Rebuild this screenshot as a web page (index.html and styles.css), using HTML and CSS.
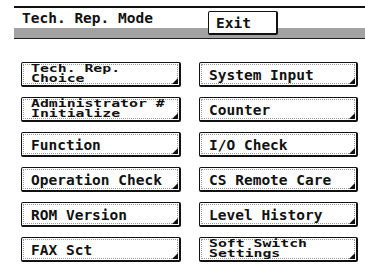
FILE: index.html
```html
<!DOCTYPE html>
<html lang="en">
<head>
    <meta charset="UTF-8">
    <title>Tech. Rep. Mode</title>
    <link rel="stylesheet" href="styles.css">
</head>
<body>
    <div class="header">
        <div class="title">Tech. Rep. Mode</div>
        <div class="bar"></div>
        <button class="exit">Exit</button>
    </div>
    <div class="menu">
        <button class="key two"><span>Tech. Rep.<br>Choice</span></button>
        <button class="key">System Input</button>
        <button class="key two"><span>Administrator #<br>Initialize</span></button>
        <button class="key">Counter</button>
        <button class="key">Function</button>
        <button class="key">I/O Check</button>
        <button class="key">Operation Check</button>
        <button class="key">CS Remote Care</button>
        <button class="key">ROM Version</button>
        <button class="key">Level History</button>
        <button class="key">FAX Sct</button>
        <button class="key two"><span>Soft Switch<br>Settings</span></button>
    </div>
</body>
</html>
```

FILE: styles.css
```css
body {
    margin: 0;
    background: #fff;
    font-family: "DejaVu Sans Mono", "Liberation Mono", monospace;
    font-weight: bold;
    color: #111;
    overflow: hidden;
}
.header {
    position: relative;
    margin: 6px 0 0 14px;
    border-top: 2px solid #111;
}
.title {
    height: 20px;
    padding-left: 8px;
    font-size: 14.5px;
    line-height: 20px;
}
.bar {
    height: 10px;
    background: #a2a2a2;
    border-bottom: 1px solid #222;
}
.exit {
    position: absolute;
    left: 194px;
    top: 3px;
    width: 70px;
    height: 24px;
    padding: 1px 0 0 7px;
    text-align: left;
    background: #fff;
    border: 1px solid #111;
    border-right-width: 2px;
    border-bottom-width: 2px;
    border-radius: 2px;
    font: inherit;
    font-size: 14.5px;
    color: #111;
}
.menu {
    display: grid;
    grid-template-columns: 160px 159px;
    grid-auto-rows: 25px;
    column-gap: 18px;
    row-gap: 10px;
    padding: 23px 0 0 21px;
}
.key {
    position: relative;
    padding: 1px 0 0 9px;
    text-align: left;
    background: #fff;
    border: 1px solid #111;
    border-right-width: 2px;
    border-bottom-width: 2px;
    border-radius: 2px;
    font: inherit;
    font-size: 14.5px;
    color: #111;
    white-space: nowrap;
}
.key::before {
    content: "";
    position: absolute;
    inset: 1px;
    border: 1px dotted #999;
}
.key::after {
    content: "";
    position: absolute;
    right: 1px;
    bottom: 1px;
    border-left: 6px solid transparent;
    border-bottom: 6px solid #111;
}
.key.two {
    padding-top: 0;
}
.key.two span {
    display: inline-block;
    font-size: 10px;
    line-height: 10px;
    transform: scaleX(1.48);
    transform-origin: left center;
}
```
